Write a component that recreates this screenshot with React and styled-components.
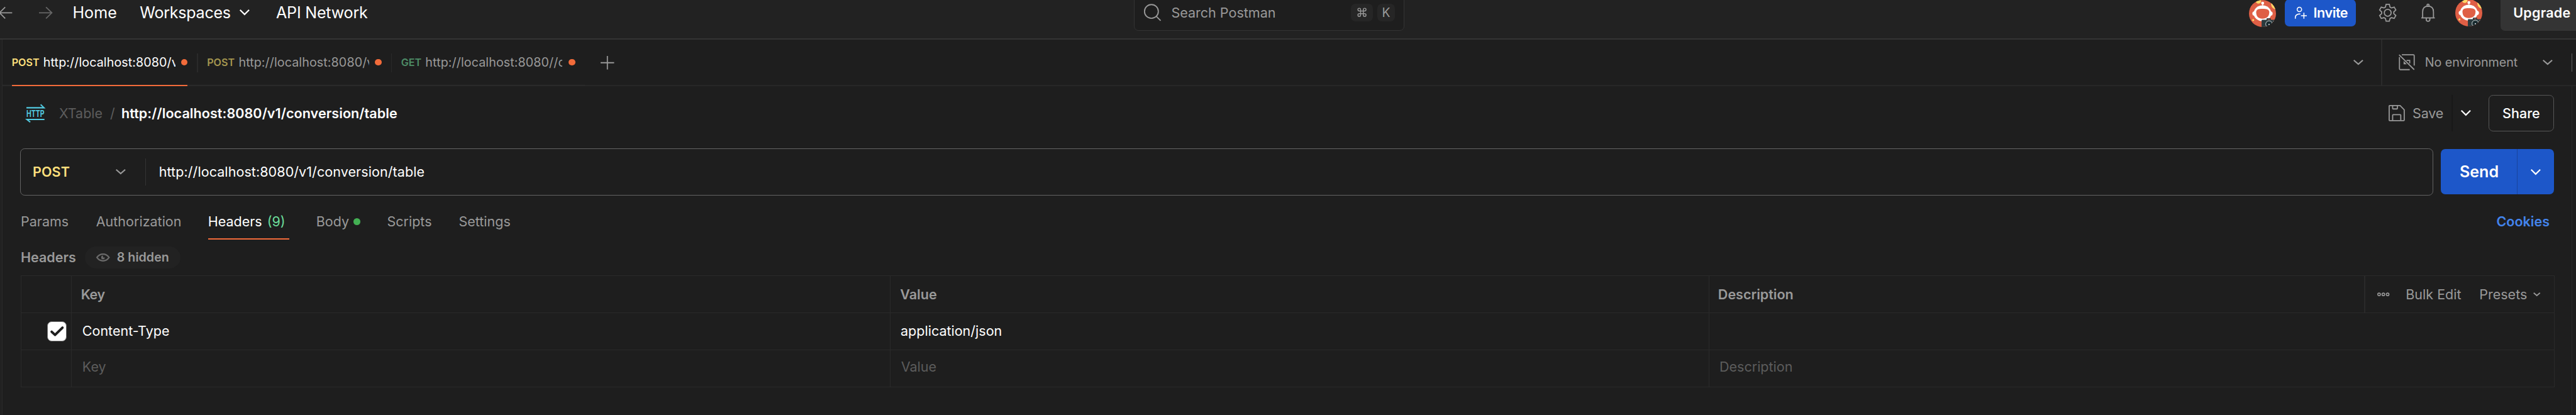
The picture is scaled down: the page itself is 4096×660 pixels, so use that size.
import React from 'react';
import styled, { createGlobalStyle } from 'styled-components';

const c = {
  base: '#1e1e1e',
  bar: '#222222',
  line: '#2a2a2a',
  strong: '#343434',
  outline: '#636363',
  text: '#ffffff',
  muted: '#999999',
  faint: '#5c5c5c',
  orange: '#f26b3a',
  blue: '#1d57c9',
  link: '#4384ec',
  yellow: '#ffe07d',
  green: '#6bdd9a',
};

const GlobalStyle = createGlobalStyle`
  html, body { margin: 0; background: ${c.base}; overflow: hidden; }
  *, *::before, *::after { box-sizing: border-box; }
`;

/* The window is laid out at 5710 x 920 and scaled down as a whole. */
const Window = styled.div`
  zoom: 0.717338;
  width: 5710px;
  height: 920px;
  display: flex;
  flex-direction: column;
  overflow: hidden;
  background: ${c.base};
  color: ${c.text};
  font-family: Inter, 'Liberation Sans', sans-serif;
  font-size: 30px;
  line-height: 40px;
`;

const Label = styled.span`
  flex: none;
  white-space: nowrap;
  margin-left: ${(p) => p.$ml || 0}px;
  width: ${(p) => (p.$w ? `${p.$w}px` : 'auto')};
  font-size: ${(p) => p.$size || 30}px;
  font-weight: ${(p) => p.$weight || 400};
  color: ${(p) => p.$color || c.text};
  letter-spacing: ${(p) => p.$ls || 0}px;
`;

const Icon = styled.svg`
  flex: none;
  display: block;
  overflow: visible;
  margin-left: ${(p) => p.$ml || 0}px;
  color: ${(p) => p.$color || c.muted};
  fill: none;
  stroke: currentColor;
  stroke-width: ${(p) => p.$stroke || 2.5};
`;

const Spacer = styled.div`
  flex: 1;
`;

/* top bar */
const TopBar = styled.header`
  flex: none;
  height: 88px;
  background: ${c.bar};
  border-bottom: 3px solid ${c.strong};
`;

const TopBarRow = styled.div`
  height: 56px;
  display: flex;
  align-items: center;
`;

const SearchBox = styled.div`
  flex: none;
  display: flex;
  align-items: center;
  width: 599px;
  height: 82px;
  margin-left: 1696px;
  padding: 0 19px 0 21px;
  background: ${c.base};
  border: 2px solid ${c.strong};
  border-radius: 10px;
`;

const KeyCap = styled.kbd`
  display: flex;
  align-items: center;
  justify-content: center;
  width: ${(p) => p.$w}px;
  height: 40px;
  margin-left: ${(p) => p.$ml || 0}px;
  border-radius: 10px;
  background: #262626;
  color: ${c.muted};
  font-family: inherit;
  font-size: 27px;
`;

const InviteButton = styled.button`
  flex: none;
  display: flex;
  align-items: center;
  width: 157px;
  height: 60px;
  margin-left: 20px;
  padding: 0 0 0 22px;
  border: 0;
  border-radius: 10px;
  background: ${c.blue};
  font: inherit;
  text-align: left;
`;

const UpgradeButton = styled.button`
  flex: none;
  width: 190px;
  height: 80px;
  margin: 0 -22px 0 40px;
  padding: 0 0 0 29px;
  border: 0;
  border-radius: 10px;
  background: #343434;
  font: inherit;
  text-align: left;
`;

const AvatarSvg = styled.svg`
  flex: none;
  display: block;
  border-radius: 50%;
  margin-top: ${(p) => p.$drop || 0}px;
  margin-left: ${(p) => p.$ml || 0}px;
`;

/* body */
const Body = styled.div`
  flex: 1;
  display: flex;
  min-height: 0;
`;

const Gutter = styled.div`
  flex: none;
  width: 6px;
  background: #212121;
  border-right: 2px solid ${c.line};
`;

const Main = styled.div`
  flex: 1;
  min-width: 0;
  display: flex;
  flex-direction: column;
`;

/* open tabs */
const TabBar = styled.div`
  flex: none;
  display: flex;
  height: 103px;
  box-shadow: inset 0 -2px 0 ${c.line};
`;

const TabStrip = styled.div`
  display: flex;
  width: 1290px;
  padding-left: 20px;
  box-shadow: inset 0 -3px 0 ${c.line};
`;

const Tab = styled.div`
  flex: none;
  display: flex;
  align-items: center;
  width: 390px;
  height: 103px;
  padding-left: ${(p) => (p.$active ? 0 : 3)}px;
  border-bottom: 3px solid ${(p) => (p.$active ? c.orange : 'transparent')};
`;

const TabUrl = styled.span`
  flex: none;
  width: ${(p) => p.$w}px;
  overflow: hidden;
  white-space: nowrap;
  font-size: 27.5px;
  letter-spacing: 0.1px;
  color: ${(p) => (p.$active ? c.text : c.muted)};
`;

const TabDivider = styled.div`
  flex: none;
  width: 2px;
  height: 41px;
  margin: 31px 17px 0 21px;
  background: ${c.line};
`;

const Dot = styled.span`
  flex: none;
  width: 15px;
  height: 15px;
  border-radius: 50%;
  margin-left: ${(p) => (p.$ml === undefined ? 'auto' : `${p.$ml}px`)};
  background: ${(p) => p.$color};
`;

const TabTools = styled.div`
  flex: 1;
  display: flex;
  align-items: center;
  height: 101px;
`;

const VRule = styled.div`
  flex: none;
  width: 2px;
  height: ${(p) => p.$h}px;
  margin-left: ${(p) => p.$ml || 0}px;
  margin-right: ${(p) => p.$mr || 0}px;
  background: ${(p) => p.$color || c.line};
`;

/* request editor */
const Editor = styled.section`
  flex: 1;
  width: 5696px;
  padding-left: 39px;
  padding-right: 39px;
  border-right: 2px solid ${c.line};
  display: flex;
  flex-direction: column;
`;

const TitleRow = styled.div`
  flex: none;
  height: 120px;
  display: flex;
  align-items: center;
  padding-left: 14px;
`;

const ShareButton = styled.button`
  flex: none;
  width: 146px;
  height: 80px;
  margin-left: 39px;
  padding: 0;
  border: 2px solid #565656;
  border-radius: 10px;
  background: transparent;
  font: inherit;
`;

const UrlRow = styled.div`
  flex: none;
  display: flex;
  align-items: center;
  height: 104px;
  margin-top: 18px;
`;

const UrlBox = styled.div`
  flex: none;
  display: flex;
  align-items: center;
  width: 5348px;
  height: 104px;
  padding-left: 26px;
  border: 2px solid ${c.outline};
  border-radius: 10px;
`;

const SendButton = styled.button`
  flex: none;
  display: flex;
  align-items: center;
  width: 250px;
  height: 100px;
  margin-left: 18px;
  padding: 0 0 0 41px;
  border: 0;
  border-radius: 10px;
  background: ${c.blue};
  font: inherit;
  text-align: left;
`;

const SectionTabs = styled.nav`
  flex: none;
  display: flex;
  height: 79px;
  margin-top: 19px;
`;

const SectionTab = styled.div`
  flex: none;
  display: flex;
  align-items: center;
  width: ${(p) => p.$w}px;
  height: 79px;
  padding-top: ${(p) => (p.$active ? 3 : 0)}px;
  margin-right: ${(p) => p.$gap || 0}px;
  border-bottom: ${(p) => (p.$active ? `3px solid ${c.orange}` : 0)};
`;

const HeadingRow = styled.div`
  flex: none;
  display: flex;
  align-items: center;
  height: 50px;
  margin-top: 15px;
`;

const HiddenPill = styled.div`
  display: flex;
  align-items: center;
  width: 212px;
  height: 50px;
  margin-left: 22px;
  padding-left: 25px;
  border-radius: 25px;
  background: #222222;
`;

const Table = styled.div`
  flex: none;
  width: 5616px;
  margin-top: 15px;
  margin-left: 1px;
  border-top: 2px solid ${c.line};
  border-left: 2px solid ${c.line};
`;

const TableRow = styled.div`
  display: grid;
  grid-template-columns: 112px 1815px 1814px 1fr;
  height: 82px;
`;

const Cell = styled.div`
  display: flex;
  align-items: center;
  padding-left: ${(p) => p.$pl || 0}px;
  padding-bottom: ${(p) => p.$pb || 0}px;
  border-right: 2px solid ${c.line};
  border-bottom: 2px solid ${c.line};
`;

const Checkbox = styled.div`
  display: flex;
  align-items: center;
  justify-content: center;
  width: 44px;
  height: 44px;
  border: 2px solid #6b6b6b;
  border-radius: 10px;
  background: #ffffff;
`;

const Chevron = ({ ml, color, w = 22, h = 12, stroke = 3 }) => (
  <Icon $ml={ml} $color={color} $stroke={stroke} width={w} height={h} viewBox={`0 0 ${w} ${h}`}>
    <path d={`M1 1L${w / 2} ${h - 2}L${w - 1} 1`} />
  </Icon>
);

const Avatar = ({ drop, ml }) => (
  <AvatarSvg $drop={drop} $ml={ml} width="60" height="60" viewBox="0 0 60 60">
    <rect width="60" height="60" fill="#df5f45" />
    <circle cx="21" cy="2" r="6" fill="#ffd866" />
    <circle cx="61" cy="9" r="12" fill="#ffd866" />
    <circle cx="9.3" cy="44.5" r="2.2" fill="#ffd866" />
    <circle cx="30.3" cy="7" r="3.3" fill="#fff" />
    <rect x="29.6" y="9" width="1.6" height="4" fill="#fff" />
    <ellipse cx="30" cy="29.5" rx="19.5" ry="17.5" fill="#fff" />
    <rect x="7.5" y="25" width="45" height="10" rx="5" fill="#fff" />
    <path d="M16 27C16 21 21 19.5 30 19.5S45 21 45 27C45 37 39 41.5 30 41.5S16 37 16 27Z" fill="#df5f45" />
    <path d="M28 60V45.5a1.5 1.5 0 0 1 1.5-1.5H39V42a1.5 1.5 0 0 1 1.5-1.5H47A1.5 1.5 0 0 1 48.5 42V44H60V60Z" fill="#2a3a3e" />
    <rect x="41" y="42.3" width="5.5" height="1.2" fill="#df5f45" />
    <circle cx="44.5" cy="53.5" r="7.5" fill="none" stroke="#e8eeee" strokeWidth="1.1" />
    <circle cx="44.5" cy="53.5" r="4.6" fill="#12262b" />
    <circle cx="44.5" cy="54" r="1.3" fill="#fff" />
    <circle cx="54.5" cy="47" r="0.9" fill="#fff" />
  </AvatarSvg>
);

const gearPoints = Array.from({ length: 6 }, (_, i) => {
  const at = (r, deg) => {
    const a = ((i * 60 - 90 + deg) * Math.PI) / 180;
    return `${(19 + r * Math.cos(a)).toFixed(2)},${(20 + r * Math.sin(a)).toFixed(2)}`;
  };
  return [at(13.6, -22), at(19, -11), at(19, 11), at(13.6, 22)].join(' ');
}).join(' ');

const Gear = () => (
  <Icon $ml={51} width="38" height="40" viewBox="0 0 38 40">
    <polygon points={gearPoints} />
    <circle cx="19" cy="20" r="7.6" />
  </Icon>
);

const Bell = () => (
  <Icon $ml={56} width="30" height="40" viewBox="0 0 30 40">
    <path d="M0 31.3H30" />
    <path d="M3 31V18C3 9.5 7.5 5.5 15 5.5S27 9.5 27 18V31" />
    <circle cx="15" cy="3.3" r="2.3" />
    <path d="M11 32v3a4 4 0 0 0 8 0v-3" />
  </Icon>
);

const HttpIcon = () => (
  <Icon $color="#52c9df" width="40" height="40" viewBox="0 0 40 40" $stroke={2.8}>
    <path d="M0 7.5H39L31.5 0.5" />
    <path d="M40 33.3H1L8.5 39.5" />
    <text
      x="0"
      y="28"
      fill="currentColor"
      stroke="none"
      fontSize="20.5"
      fontWeight="700"
      textLength="40"
      lengthAdjust="spacingAndGlyphs"
    >
      HTTP
    </text>
  </Icon>
);

const EnvironmentIcon = () => (
  <Icon $ml={37} width="36" height="36" viewBox="0 0 36 36">
    <path d="M7 1.5H32.5a2 2 0 0 1 2 2V25.5" />
    <path d="M1.8 6.5V32.5a2 2 0 0 0 2 2H24.5" />
    <path d="M1 1.5L34.5 34.5" />
    <path d="M17.5 14H24.5V20.5" />
    <path d="M11 15.5V22.5H18Z" fill="currentColor" stroke="none" />
  </Icon>
);

const SaveIcon = () => (
  <Icon width="36" height="36" viewBox="0 0 36 36">
    <path d="M2.5 1.3H25.5L34.7 10.5V33.5a1.2 1.2 0 0 1-1.2 1.2H2.5a1.2 1.2 0 0 1-1.2-1.2V2.5a1.2 1.2 0 0 1 1.2-1.2Z" />
    <path d="M9 1.5V7.5a1.2 1.2 0 0 0 1.2 1.2H18.3a1.2 1.2 0 0 0 1.2-1.2V1.5" />
    <path d="M9 34.5V22.5a1.2 1.2 0 0 1 1.2-1.2H25.8a1.2 1.2 0 0 1 1.2 1.2V34.5" />
  </Icon>
);

const tabs = [
  { method: 'POST', methodWidth: 70, color: c.yellow, url: 'http://localhost:8080/v1', urlWidth: 293, active: true },
  { method: 'POST', methodWidth: 70, color: '#a5964f', url: 'http://localhost:8080/v1', urlWidth: 290 },
  { method: 'GET', methodWidth: 54, color: '#4d8c66', url: 'http://localhost:8080//c', urlWidth: 304 },
];

export default function App() {
  return (
    <>
      <GlobalStyle />
      <Window>
        <TopBar>
          <TopBarRow>
            <Icon width="27" height="26" viewBox="0 0 27 26">
              <path d="M27 13H0M11.5 0.5L-1 13L11.5 25.5" />
            </Icon>
            <Icon $ml={60} $color="#666666" width="30" height="26" viewBox="0 0 30 26">
              <path d="M0 13H28M15.5 0.5L28.5 13L15.5 25.5" />
            </Icon>
            <Label as="a" $ml={44} $w={149} $size={35}>Home</Label>
            <Label as="a" $w={221} $size={35} $ls={-0.4}>Workspaces</Label>
            <Chevron w={22} h={13} color={c.text} />
            <Label as="a" $ml={59} $w={206} $size={35} $ls={-0.3}>API Network</Label>
            <SearchBox>
              <Icon width="38" height="38" viewBox="0 0 38 38" $stroke={2.6}>
                <circle cx="16.5" cy="17" r="15.3" />
                <path d="M27.5 28L37 37.5" />
              </Icon>
              <Label $ml={22} $color={c.muted}>Search Postman</Label>
              <Spacer />
              <KeyCap $w={48}>
                <Icon width="24" height="24" viewBox="0 0 24 24" $stroke={2}>
                  <path d="M15 6v12a3 3 0 1 0 3-3H6a3 3 0 1 0 3 3V6a3 3 0 1 0-3 3h12a3 3 0 1 0-3-3" />
                </Icon>
              </KeyCap>
              <KeyCap $w={40} $ml={10}>K</KeyCap>
            </SearchBox>
            <Spacer />
            <Avatar drop={4} />
            <InviteButton>
              <Icon width="26" height="26" viewBox="0 0 26 26" $color={c.text} $stroke={2.2}>
                <circle cx="10" cy="5.5" r="4.9" />
                <path d="M1 26V23.5C1 18 4.5 15.5 12 15.5" />
                <path d="M13.5 19.5H26.5M20 13V26" />
              </Icon>
              <Label $ml={15} $weight={600} $ls={-0.6}>Invite</Label>
            </InviteButton>
            <Gear />
            <Bell />
            <Avatar ml={45} />
            <UpgradeButton>
              <Label $weight={600} $ls={0.3}>Upgrade</Label>
            </UpgradeButton>
          </TopBarRow>
        </TopBar>

        <Body>
          <Gutter />
          <Main>
            <TabBar>
              <TabStrip>
                {tabs.map((tab, i) => (
                  <React.Fragment key={i}>
                    {i > 0 && <TabDivider />}
                    <Tab $active={tab.active}>
                      <Label $w={tab.methodWidth} $size={22.5} $weight={600} $color={tab.color}>
                        {tab.method}
                      </Label>
                      <TabUrl $w={tab.urlWidth} $active={tab.active}>{tab.url}</TabUrl>
                      <Dot $color={c.orange} />
                    </Tab>
                  </React.Fragment>
                ))}
              </TabStrip>
              <TabTools>
                <Icon $ml={35} width="30" height="30" viewBox="0 0 30 30">
                  <path d="M0 15H30M15 0V30" />
                </Icon>
                <Spacer />
                <Chevron color={c.muted} />
                <VRule $ml={40} $h={101} />
                <EnvironmentIcon />
                <Label $ml={22} $w={261} $size={27.5} $color={c.muted} $ls={-0.1}>No environment</Label>
                <Chevron color={c.muted} />
                <VRule $ml={42} $mr={8} $h={40} $color="#5f5f5f" />
              </TabTools>
            </TabBar>

            <Editor>
              <TitleRow>
                <HttpIcon />
                <Label $ml={32} $w={113} $color={c.faint}>XTable</Label>
                <Label $w={25} $color={c.faint}>/</Label>
                <Label $weight={600} $ls={0.1}>http://localhost:8080/v1/conversion/table</Label>
                <Spacer />
                <SaveIcon />
                <Label $ml={17} $w={87} $color={c.muted} $ls={-0.3}>Save</Label>
                <VRule $h={80} $color="#181818" />
                <Chevron ml={18} h={13} color={c.text} />
                <ShareButton>
                  <Label $weight={500}>Share</Label>
                </ShareButton>
              </TitleRow>

              <UrlRow>
                <UrlBox>
                  <Label $w={184} $weight={600} $color={c.yellow} $ls={0.2}>POST</Label>
                  <Chevron color={c.muted} />
                  <VRule $ml={43} $h={60} $color="#343434" />
                  <Label $ml={29} $ls={0.1}>http://localhost:8080/v1/conversion/table</Label>
                </UrlBox>
                <SendButton>
                  <Label $w={127} $size={35} $weight={600}>Send</Label>
                  <VRule $h={100} $color="#19449e" />
                  <Chevron ml={29} h={13} color={c.text} />
                </SendButton>
              </UrlRow>

              <SectionTabs>
                <SectionTab $w={168}><Label $ml={1} $color={c.muted}>Params</Label></SectionTab>
                <SectionTab $w={248}><Label $color={c.muted}>Authorization</Label></SectionTab>
                <SectionTab $w={180} $gap={60} $active>
                  <Label $w={131}>Headers</Label>
                  <Label $color={c.green}>(9)</Label>
                </SectionTab>
                <SectionTab $w={157}>
                  <Label $w={83} $color={c.muted}>Body</Label>
                  <Dot $ml={0} $color="#43b053" />
                </SectionTab>
                <SectionTab $w={159}><Label $color={c.muted}>Scripts</Label></SectionTab>
                <SectionTab $w={150}><Label $color={c.muted}>Settings</Label></SectionTab>
                <Spacer />
                <SectionTab $w={128}><Label $color={c.link} $weight={600}>Cookies</Label></SectionTab>
              </SectionTabs>

              <HeadingRow>
                <Label $ml={1} $w={120} $weight={600} $color={c.muted}>Headers</Label>
                <HiddenPill>
                  <Icon width="30" height="18" viewBox="0 0 30 18" $color="#6b6b6b" $stroke={3}>
                    <path d="M1.5 9C5 4 9.500 1.5 15 1.5S25 4 28.5 9C25 14 20.5 16.5 15 16.5S5 14 1.5 9Z" />
                    <path d="M15 5A4 4 0 1 0 19 9H15Z" fill="currentColor" stroke="none" />
                  </Icon>
                  <Label $ml={16} $size={27.5} $weight={600} $color={c.muted}>8 hidden</Label>
                </HiddenPill>
              </HeadingRow>

              <Table>
                <TableRow>
                  <Cell />
                  <Cell $pl={20}><Label $weight={600} $color={c.muted} $ls={-0.5}>Key</Label></Cell>
                  <Cell $pl={21}><Label $weight={600} $color={c.muted}>Value</Label></Cell>
                  <Cell $pl={20}>
                    <Label $weight={600} $color={c.muted}>Description</Label>
                    <Spacer />
                    <VRule $h={80} />
                    <Icon $ml={27} width="27" height="9" viewBox="0 0 27 9" $stroke={2.2}>
                      <circle cx="4" cy="4.5" r="2.9" />
                      <circle cx="13.5" cy="4.5" r="2.9" />
                      <circle cx="23" cy="4.5" r="2.9" />
                    </Icon>
                    <Label $ml={36} $w={163} $color={c.muted}>Bulk Edit</Label>
                    <Label $w={120} $color={c.muted}>Presets</Label>
                    <Chevron w={16} h={9} stroke={2.5} color={c.muted} />
                    <VRule $ml={27} $h={0} />
                  </Cell>
                </TableRow>
                <TableRow>
                  <Cell $pl={57}>
                    <Checkbox>
                      <Icon width="30" height="22" viewBox="0 0 30 22" $color={c.base} $stroke={5.5}>
                        <path d="M3 12L10.5 19L27 3" strokeLinecap="round" strokeLinejoin="round" />
                      </Icon>
                    </Checkbox>
                  </Cell>
                  <Cell $pl={23} $pb={3}><Label>Content-Type</Label></Cell>
                  <Cell $pl={22} $pb={3}><Label>application/json</Label></Cell>
                  <Cell />
                </TableRow>
                <TableRow>
                  <Cell />
                  <Cell $pl={23} $pb={8}><Label $color={c.faint}>Key</Label></Cell>
                  <Cell $pl={23} $pb={8}><Label $color={c.faint}>Value</Label></Cell>
                  <Cell $pl={23} $pb={8}><Label $color={c.faint}>Description</Label></Cell>
                </TableRow>
              </Table>
            </Editor>
          </Main>
        </Body>
      </Window>
    </>
  );
}
